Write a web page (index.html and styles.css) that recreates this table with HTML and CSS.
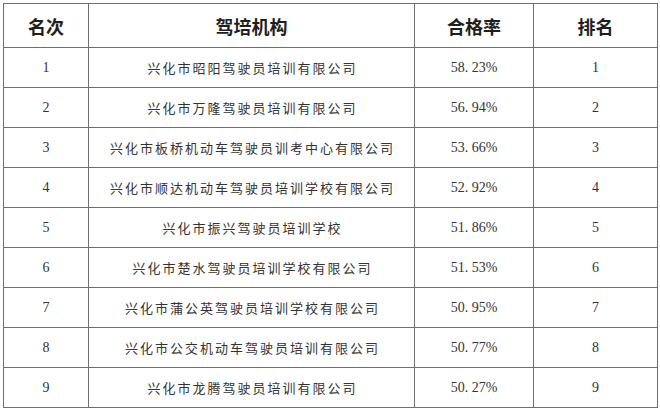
FILE: index.html
```html
<!DOCTYPE html>
<html lang="zh-CN">
<head>
<meta charset="utf-8">
<title>驾培机构合格率排名</title>
<link rel="stylesheet" href="styles.css">
</head>
<body>
<table class="rank">
  <colgroup>
    <col class="c1"><col class="c2"><col class="c3"><col class="c4">
  </colgroup>
  <thead>
    <tr><th>名次</th><th>驾培机构</th><th>合格率</th><th>排名</th></tr>
  </thead>
  <tbody>
    <tr><td class="num">1</td><td class="name">兴化市昭阳驾驶员培训有限公司</td><td class="num">58. 23%</td><td class="num">1</td></tr>
    <tr><td class="num">2</td><td class="name">兴化市万隆驾驶员培训有限公司</td><td class="num">56. 94%</td><td class="num">2</td></tr>
    <tr><td class="num">3</td><td class="name">兴化市板桥机动车驾驶员训考中心有限公司</td><td class="num">53. 66%</td><td class="num">3</td></tr>
    <tr><td class="num">4</td><td class="name">兴化市顺达机动车驾驶员培训学校有限公司</td><td class="num">52. 92%</td><td class="num">4</td></tr>
    <tr><td class="num">5</td><td class="name">兴化市振兴驾驶员培训学校</td><td class="num">51. 86%</td><td class="num">5</td></tr>
    <tr><td class="num">6</td><td class="name">兴化市楚水驾驶员培训学校有限公司</td><td class="num">51. 53%</td><td class="num">6</td></tr>
    <tr><td class="num">7</td><td class="name">兴化市蒲公英驾驶员培训学校有限公司</td><td class="num">50. 95%</td><td class="num">7</td></tr>
    <tr><td class="num">8</td><td class="name">兴化市公交机动车驾驶员培训有限公司</td><td class="num">50. 77%</td><td class="num">8</td></tr>
    <tr><td class="num">9</td><td class="name">兴化市龙腾驾驶员培训有限公司</td><td class="num">50. 27%</td><td class="num">9</td></tr>
  </tbody>
</table>
</body>
</html>
```

FILE: styles.css
```css
html, body {
  margin: 0;
  background: #fff;
}
body {
  padding: 3px 0 0 3px;
}
.rank {
  border-collapse: collapse;
  table-layout: fixed;
  width: 654px;
  color: #2b2b2b;
}
.rank .c1 { width: 85px; }
.rank .c2 { width: 326px; }
.rank .c3 { width: 119px; }
.rank .c4 { width: 124px; }
.rank th,
.rank td {
  border: 1px solid #6f6f6f;
  padding: 0;
  text-align: center;
  vertical-align: middle;
}
.rank th {
  height: 43px;
  font-family: "Noto Sans CJK SC", sans-serif;
  font-weight: 700;
  font-size: 18px;
  color: #1e1e1e;
}
.rank td {
  height: 39px;
}
.rank .name {
  font-family: "Noto Sans CJK SC", sans-serif;
  font-size: 13px;
  letter-spacing: 2px;
  text-indent: 2px;
  color: #333;
}
.rank .num {
  font-family: "Liberation Serif", serif;
  font-size: 14px;
  color: #333;
}
```
